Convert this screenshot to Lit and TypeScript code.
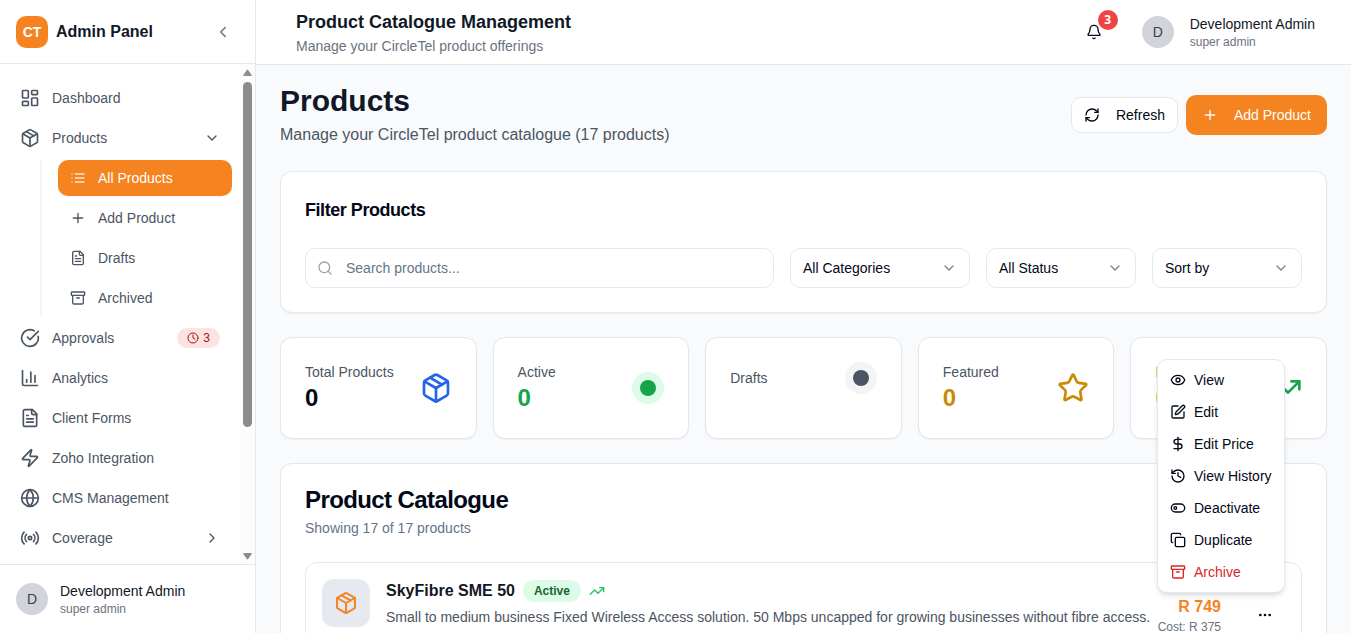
import { LitElement, html, css, svg, nothing } from "lit";
import { customElement } from "lit/decorators.js";

const ICONS: Record<string, any> = {
  dashboard: svg`<rect width="7" height="9" x="3" y="3" rx="1"/><rect width="7" height="5" x="14" y="3" rx="1"/><rect width="7" height="9" x="14" y="12" rx="1"/><rect width="7" height="5" x="3" y="16" rx="1"/>`,
  package: svg`<path d="m7.5 4.27 9 5.15"/><path d="M21 8a2 2 0 0 0-1-1.73l-7-4a2 2 0 0 0-2 0l-7 4A2 2 0 0 0 3 8v8a2 2 0 0 0 1 1.73l7 4a2 2 0 0 0 2 0l7-4A2 2 0 0 0 21 16Z"/><path d="m3.3 7 8.7 5 8.7-5"/><path d="M12 22V12"/>`,
  list: svg`<path d="M8 6h13M8 12h13M8 18h13M3 6h.01M3 12h.01M3 18h.01"/>`,
  plus: svg`<path d="M5 12h14M12 5v14"/>`,
  file: svg`<path d="M15 2H6a2 2 0 0 0-2 2v16a2 2 0 0 0 2 2h12a2 2 0 0 0 2-2V7Z"/><path d="M14 2v4a2 2 0 0 0 2 2h4"/><path d="M10 9H8M16 13H8M16 17H8"/>`,
  archive: svg`<rect width="20" height="5" x="2" y="3" rx="1"/><path d="M4 8v11a2 2 0 0 0 2 2h12a2 2 0 0 0 2-2V8"/><path d="M10 12h4"/>`,
  check: svg`<path d="M21.801 10A10 10 0 1 1 17 3.335"/><path d="m9 11 3 3L22 4"/>`,
  clock: svg`<circle cx="12" cy="12" r="10"/><path d="M12 6v6l4 2"/>`,
  chart: svg`<path d="M3 3v16a2 2 0 0 0 2 2h16"/><path d="M18 17V9M13 17V5M8 17v-3"/>`,
  zap: svg`<path d="M4 14a1 1 0 0 1-.78-1.63l9.9-10.2a.5.5 0 0 1 .86.46l-1.92 6.02A1 1 0 0 0 13 10h7a1 1 0 0 1 .78 1.63l-9.9 10.2a.5.5 0 0 1-.86-.46l1.92-6.02A1 1 0 0 0 11 14z"/>`,
  globe: svg`<circle cx="12" cy="12" r="10"/><path d="M12 2a14.5 14.5 0 0 0 0 20 14.5 14.5 0 0 0 0-20"/><path d="M2 12h20"/>`,
  radio: svg`<path d="M4.9 19.1C1 15.2 1 8.8 4.9 4.9"/><path d="M7.8 16.2c-2.3-2.3-2.3-6.1 0-8.5"/><circle cx="12" cy="12" r="2"/><path d="M16.2 7.8c2.3 2.3 2.3 6.1 0 8.5"/><path d="M19.1 4.9C23 8.8 23 15.1 19.1 19"/>`,
  left: svg`<path d="m15 18-6-6 6-6"/>`,
  right: svg`<path d="m9 18 6-6-6-6"/>`,
  down: svg`<path d="m6 9 6 6 6-6"/>`,
  bell: svg`<path d="M10.268 21a2 2 0 0 0 3.464 0"/><path d="M3.262 15.326A1 1 0 0 0 4 17h16a1 1 0 0 0 .74-1.673C19.41 13.956 18 12.499 18 8A6 6 0 0 0 6 8c0 4.499-1.411 5.956-2.738 7.326"/>`,
  refresh: svg`<path d="M3 12a9 9 0 0 1 9-9 9.75 9.75 0 0 1 6.74 2.74L21 8"/><path d="M21 3v5h-5"/><path d="M21 12a9 9 0 0 1-9 9 9.75 9.75 0 0 1-6.74-2.74L3 16"/><path d="M8 16H3v5"/>`,
  search: svg`<circle cx="11" cy="11" r="8"/><path d="m21 21-4.3-4.3"/>`,
  star: svg`<path d="M11.525 2.295a.53.53 0 0 1 .95 0l2.31 4.679a2.123 2.123 0 0 0 1.595 1.16l5.166.756a.53.53 0 0 1 .294.904l-3.736 3.638a2.123 2.123 0 0 0-.611 1.878l.882 5.14a.53.53 0 0 1-.771.56l-4.618-2.428a2.122 2.122 0 0 0-1.973 0L6.396 21.01a.53.53 0 0 1-.77-.56l.881-5.139a2.122 2.122 0 0 0-.611-1.879L2.16 9.795a.53.53 0 0 1 .294-.906l5.165-.755a2.122 2.122 0 0 0 1.597-1.16z"/>`,
  trend: svg`<path d="m22 7-8.5 8.5-5-5L2 17"/><path d="M16 7h6v6"/>`,
  eye: svg`<path d="M2.062 12.348a1 1 0 0 1 0-.696 10.75 10.75 0 0 1 19.876 0 1 1 0 0 1 0 .696 10.75 10.75 0 0 1-19.876 0"/><circle cx="12" cy="12" r="3"/>`,
  edit: svg`<path d="M12 3H5a2 2 0 0 0-2 2v14a2 2 0 0 0 2 2h14a2 2 0 0 0 2-2v-7"/><path d="M18.375 2.625a1 1 0 0 1 3 3l-9.013 9.014a2 2 0 0 1-.853.505l-2.873.84a.5.5 0 0 1-.62-.62l.84-2.873a2 2 0 0 1 .506-.852z"/>`,
  dollar: svg`<path d="M12 2v20"/><path d="M17 5H9.5a3.5 3.5 0 0 0 0 7h5a3.5 3.5 0 0 1 0 7H6"/>`,
  history: svg`<path d="M3 12a9 9 0 1 0 9-9 9.75 9.75 0 0 0-6.74 2.74L3 8"/><path d="M3 3v5h5"/><path d="M12 7v5l4 2"/>`,
  toggle: svg`<rect width="20" height="12" x="2" y="6" rx="6"/><circle cx="8" cy="12" r="2"/>`,
  copy: svg`<rect width="14" height="14" x="8" y="8" rx="2"/><path d="M4 16c-1.1 0-2-.9-2-2V4c0-1.1.9-2 2-2h10c1.1 0 2 .9 2 2"/>`,
  more: svg`<circle cx="12" cy="12" r="1"/><circle cx="19" cy="12" r="1"/><circle cx="5" cy="12" r="1"/>`,
};

const icon = (name: string, size = 16) => html`<svg
  width=${size} height=${size} viewBox="0 0 24 24" fill="none" stroke="currentColor"
  stroke-width="2" stroke-linecap="round" stroke-linejoin="round">${ICONS[name]}</svg>`;

const shared = css`
  :host { display: block; font-family: "Liberation Sans", Arial, sans-serif; font-size: 14px; line-height: 20px; white-space: nowrap; }
  * { box-sizing: border-box; margin: 0; }
  svg { display: block; flex: none; }
  .person { display: flex; flex-direction: column; }
  .name { color: #111827; line-height: 20px; }
  .role { color: #6b7280; font-size: 12px; line-height: 16px; }
  .avatar { width: 32px; height: 32px; border-radius: 50%; background: #d1d5db; color: #374151; display: flex; align-items: center; justify-content: center; flex: none; }
`;

@customElement("admin-sidebar")
class AdminSidebar extends LitElement {
  static styles = [shared, css`
    :host { width: 256px; height: 633px; background: #fff; border-right: 1px solid #e5e7eb; display: flex; flex-direction: column; flex: none; }
    .brand { height: 64px; border-bottom: 1px solid #e5e7eb; display: flex; align-items: center; padding: 0 23px 0 16px; flex: none; }
    .logo { width: 32px; height: 32px; border-radius: 10px; background: #f5831f; color: #fff; font-weight: 700; display: flex; align-items: center; justify-content: center; margin-right: 8px; }
    .brand-name { font-size: 16px; font-weight: 700; color: #111827; flex: 1; }
    .collapse { color: #6b7280; }
    .scroll { flex: 1; min-height: 0; display: flex; overflow: hidden; }
    .nav { flex: 1; padding: 16px 8px; display: flex; flex-direction: column; gap: 4px; overflow: hidden; }
    .item { height: 36px; padding: 0 12px; display: flex; align-items: center; gap: 12px; color: #4b5563; flex: none; border-radius: 10px; }
    .label { flex: 1; }
    .sub { margin-left: 32px; border-left: 2px solid #f3f4f6; padding-left: 16px; display: flex; flex-direction: column; gap: 4px; }
    .current { background: #f5831f; color: #fff; box-shadow: 0 1px 2px rgba(0,0,0,.05); }
    .current svg { opacity: .8; }
    .count { height: 20px; width: 43px; border-radius: 10px; background: #fee2e2; color: #991b1b; font-size: 12px; display: flex; align-items: center; justify-content: center; gap: 4px; }
    .bar { width: 15px; background: #fcfcfc; display: flex; flex-direction: column; align-items: center; padding: 5px 0 4px; flex: none; }
    .thumb { width: 9px; height: 345px; border-radius: 5px; background: #8b8b8b; margin: 6px 0 auto; }
    .user { height: 69px; border-top: 1px solid #e5e7eb; padding: 0 16px; display: flex; align-items: center; gap: 12px; flex: none; }
  `];

  item(name: string, label: string, opts: { sub?: boolean; current?: boolean; end?: any } = {}) {
    return html`<div class="item ${opts.current ? "current" : ""}">
      ${icon(name, opts.sub ? 16 : 20)}<span class="label">${label}</span>${opts.end ?? nothing}
    </div>`;
  }

  render() {
    return html`
      <div class="brand"><div class="logo">CT</div><div class="brand-name">Admin Panel</div><span class="collapse">${icon("left", 18)}</span></div>
      <div class="scroll">
        <nav class="nav">
          ${this.item("dashboard", "Dashboard")}
          ${this.item("package", "Products", { end: icon("down") })}
          <div class="sub">
            ${this.item("list", "All Products", { sub: true, current: true })}
            ${this.item("plus", "Add Product", { sub: true })}
            ${this.item("file", "Drafts", { sub: true })}
            ${this.item("archive", "Archived", { sub: true })}
          </div>
          ${this.item("check", "Approvals", { end: html`<span class="count">${icon("clock", 12)}3</span>` })}
          ${this.item("chart", "Analytics")}
          ${this.item("file", "Client Forms")}
          ${this.item("zap", "Zoho Integration")}
          ${this.item("globe", "CMS Management")}
          ${this.item("radio", "Coverage", { end: icon("right") })}
        </nav>
        <div class="bar">
          <svg width="9" height="7" viewBox="0 0 9 7"><path d="M4.5 .8 8.4 6.4H.6Z" fill="#8b8b8b" stroke="#8b8b8b" stroke-linejoin="round"/></svg>
          <div class="thumb"></div>
          <svg width="9" height="7" viewBox="0 0 9 7"><path d="M4.5 6.2 8.4 .6H.6Z" fill="#8b8b8b" stroke="#8b8b8b" stroke-linejoin="round"/></svg>
        </div>
      </div>
      <div class="user"><div class="avatar">D</div><div class="person"><span class="name">Development Admin</span><span class="role">super admin</span></div></div>
    `;
  }
}

@customElement("admin-header")
class AdminHeader extends LitElement {
  static styles = [shared, css`
    :host { height: 65px; background: #fff; border-bottom: 1px solid #e5e7eb; display: flex; align-items: center; padding: 0 36px 0 40px; flex: none; }
    .titles { flex: 1; }
    h1 { font-size: 18px; line-height: 28px; color: #111827; }
    .tag { color: #6b7280; line-height: 20px; }
    .alerts { position: relative; color: #020817; margin-right: 40px; }
    .dot { position: absolute; left: 12px; top: -14px; width: 20px; height: 20px; border-radius: 50%; background: #ef4444; color: #fff; font: 700 12px/20px "Open Sans", sans-serif; text-align: center; }
    .person { margin-left: 16px; }
  `];
  render() {
    return html`
      <div class="titles"><h1>Product Catalogue Management</h1><div class="tag">Manage your CircleTel product offerings</div></div>
      <div class="alerts">${icon("bell")}<span class="dot">3</span></div>
      <div class="avatar">D</div>
      <div class="person"><span class="name">Development Admin</span><span class="role">super admin</span></div>
    `;
  }
}

@customElement("row-menu")
class RowMenu extends LitElement {
  static styles = [shared, css`
    :host { position: absolute; left: 1157px; top: 359px; width: 128px; box-sizing: border-box; padding: 4px; background: #fff; border: 1px solid #e2e8f0; border-radius: 10px; box-shadow: 0 4px 6px -1px rgba(0,0,0,.1), 0 2px 4px -2px rgba(0,0,0,.1); color: #020817; }
    .entry { height: 32px; padding: 0 8px; display: flex; align-items: center; gap: 8px; }
    .danger { color: #dc2626; }
  `];
  render() {
    const entries = [["eye", "View"], ["edit", "Edit"], ["dollar", "Edit Price"], ["history", "View History"], ["toggle", "Deactivate"], ["copy", "Duplicate"], ["archive", "Archive"]];
    return entries.map(([i, t]) => html`<div class="entry ${t === "Archive" ? "danger" : ""}">${icon(i)}<span>${t}</span></div>`);
  }
}

@customElement("app-root")
class AppRoot extends LitElement {
  static styles = [shared, css`
    :host { display: flex; position: relative; width: 1366px; height: 633px; overflow: hidden; background: #fff; }
    .main { width: 1095px; height: 633px; background: #f9fafb; display: flex; flex-direction: column; overflow: hidden; }
    .content { padding: 17px 24px 0; display: flex; flex-direction: column; gap: 24px; }
    .card { background: #fff; border: 1px solid #e2e8f0; border-radius: 12px; box-shadow: 0 1px 2px rgba(0,0,0,.05); }
    .top { display: flex; align-items: center; height: 65px; }
    .heading { flex: 1; }
    h2 { font-size: 30px; line-height: 36px; color: #111827; }
    .lead { font-size: 16px; line-height: 24px; color: #4b5563; margin-top: 4px; }
    .actions { display: flex; align-items: center; gap: 8px; margin-top: 1px; }
    .btn { display: flex; align-items: center; justify-content: space-between; border-radius: 10px; }
    .ghost { width: 107px; height: 36px; padding: 0 12px; border: 1px solid #e2e8f0; background: #fff; color: #020817; }
    .primary { width: 141px; height: 40px; padding: 0 16px; background: #f5831f; color: #fff; }
    .filters { height: 142px; padding: 24px; display: flex; flex-direction: column; justify-content: space-between; }
    h3 { font-size: 18px; line-height: 28px; letter-spacing: -.45px; color: #020817; }
    .controls { display: flex; gap: 16px; }
    .field { height: 40px; border: 1px solid #e2e8f0; border-radius: 10px; display: flex; align-items: center; padding: 0 12px; color: #020817; justify-content: space-between; background: #fff; }
    .search { flex: 1; justify-content: flex-start; padding-left: 11px; gap: 13px; color: #64748b; }
    .search svg { color: #9ca3af; }
    .wide { width: 180px; }
    .narrow { width: 150px; }
    .field:not(.search) svg { opacity: .5; }
    .stats { display: grid; grid-template-columns: repeat(5, 1fr); gap: 16px; }
    .stat { height: 102px; padding: 24px; display: flex; align-items: flex-start; }
    .inner { display: flex; align-items: center; justify-content: space-between; width: 100%; }
    .stat-label { color: #4b5563; }
    .stat-value { font-size: 24px; line-height: 32px; font-weight: 700; color: #020817; }
    .disc { width: 32px; height: 32px; border-radius: 50%; display: flex; align-items: center; justify-content: center; }
    .disc i { width: 16px; height: 16px; border-radius: 50%; background: currentColor; }
    .ok { background: #dcfce7; color: #16a34a; }
    .idle { background: #f3f4f6; color: #4b5563; }
    .blue { color: #2563eb; }
    .green { color: #16a34a; }
    .gold { color: #ca8a04; }
    .bright { color: #eab308; }
    .amber .stat-label { color: #f5831f; }
    .catalogue { padding: 20px 24px; height: 300px; }
    .title { font-size: 24px; line-height: 32px; font-weight: 700; letter-spacing: -.6px; color: #020817; }
    .count { color: #64748b; margin-top: 2px; }
    .row { margin-top: 24px; height: 140px; border: 1px solid #e2e8f0; border-radius: 12px; padding: 16px; display: flex; }
    .tile { width: 48px; height: 48px; border-radius: 12px; background: #e6e9f0; color: #f5831f; display: flex; align-items: center; justify-content: center; flex: none; }
    .info { flex: 1; margin-left: 16px; }
    .line { display: flex; align-items: center; gap: 8px; height: 24px; }
    .product { font-size: 16px; font-weight: 700; color: #111827; }
    .pill { height: 22px; padding: 0 11px; border-radius: 11px; background: #dcfce7; color: #166534; font-size: 12px; font-weight: 700; display: flex; align-items: center; }
    .line svg { color: #22c55e; }
    .desc { color: #4b5563; margin-top: 4px; }
    .price { text-align: right; padding-top: 17px; margin-right: 36px; }
    .amount { font-size: 16px; line-height: 22px; font-weight: 700; color: #f5831f; }
    .cost { font-size: 12px; line-height: 16px; color: #6b7280; margin-top: 1px; }
    .more { margin: 28px 12px 0 0; color: #020817; }
  `];

  stat(label: string, value: string | null, tone: string, art: any, cls = "") {
    return html`<div class="card stat ${cls}"><div class="inner">
      <div><div class="stat-label">${label}</div>${value === null ? nothing : html`<div class="stat-value ${tone}">${value}</div>`}</div>
      ${art}
    </div></div>`;
  }

  render() {
    return html`
      <admin-sidebar></admin-sidebar>
      <main class="main">
        <admin-header></admin-header>
        <div class="content">
          <section class="top">
            <div class="heading"><h2>Products</h2><div class="lead">Manage your CircleTel product catalogue (17 products)</div></div>
            <div class="actions">
              <div class="btn ghost">${icon("refresh")}<span>Refresh</span></div>
              <div class="btn primary">${icon("plus")}<span>Add Product</span></div>
            </div>
          </section>
          <section class="card filters">
            <h3>Filter Products</h3>
            <div class="controls">
              <div class="field search">${icon("search")}<span>Search products...</span></div>
              <div class="field wide"><span>All Categories</span>${icon("down")}</div>
              <div class="field narrow"><span>All Status</span>${icon("down")}</div>
              <div class="field narrow"><span>Sort by</span>${icon("down")}</div>
            </div>
          </section>
          <section class="stats">
            ${this.stat("Total Products", "0", "", html`<span class="blue">${icon("package", 32)}</span>`)}
            ${this.stat("Active", "0", "green", html`<span class="disc ok"><i></i></span>`)}
            ${this.stat("Drafts", null, "", html`<span class="disc idle"><i></i></span>`)}
            ${this.stat("Featured", "0", "gold", html`<span class="gold">${icon("star", 32)}</span>`)}
            ${this.stat("Popular", "0", "bright", html`<span class="green">${icon("trend", 32)}</span>`, "amber")}
          </section>
          <section class="card catalogue">
            <div class="title">Product Catalogue</div>
            <div class="count">Showing 17 of 17 products</div>
            <div class="row">
              <div class="tile">${icon("package", 24)}</div>
              <div class="info">
                <div class="line"><span class="product">SkyFibre SME 50</span><span class="pill">Active</span>${icon("trend")}</div>
                <div class="desc">Small to medium business Fixed Wireless Access solution. 50 Mbps uncapped for growing businesses without fibre access.</div>
              </div>
              <div class="price"><div class="amount">R 749</div><div class="cost">Cost: R 375</div></div>
              <div class="more">${icon("more")}</div>
            </div>
          </section>
        </div>
      </main>
      <row-menu></row-menu>
    `;
  }
}
